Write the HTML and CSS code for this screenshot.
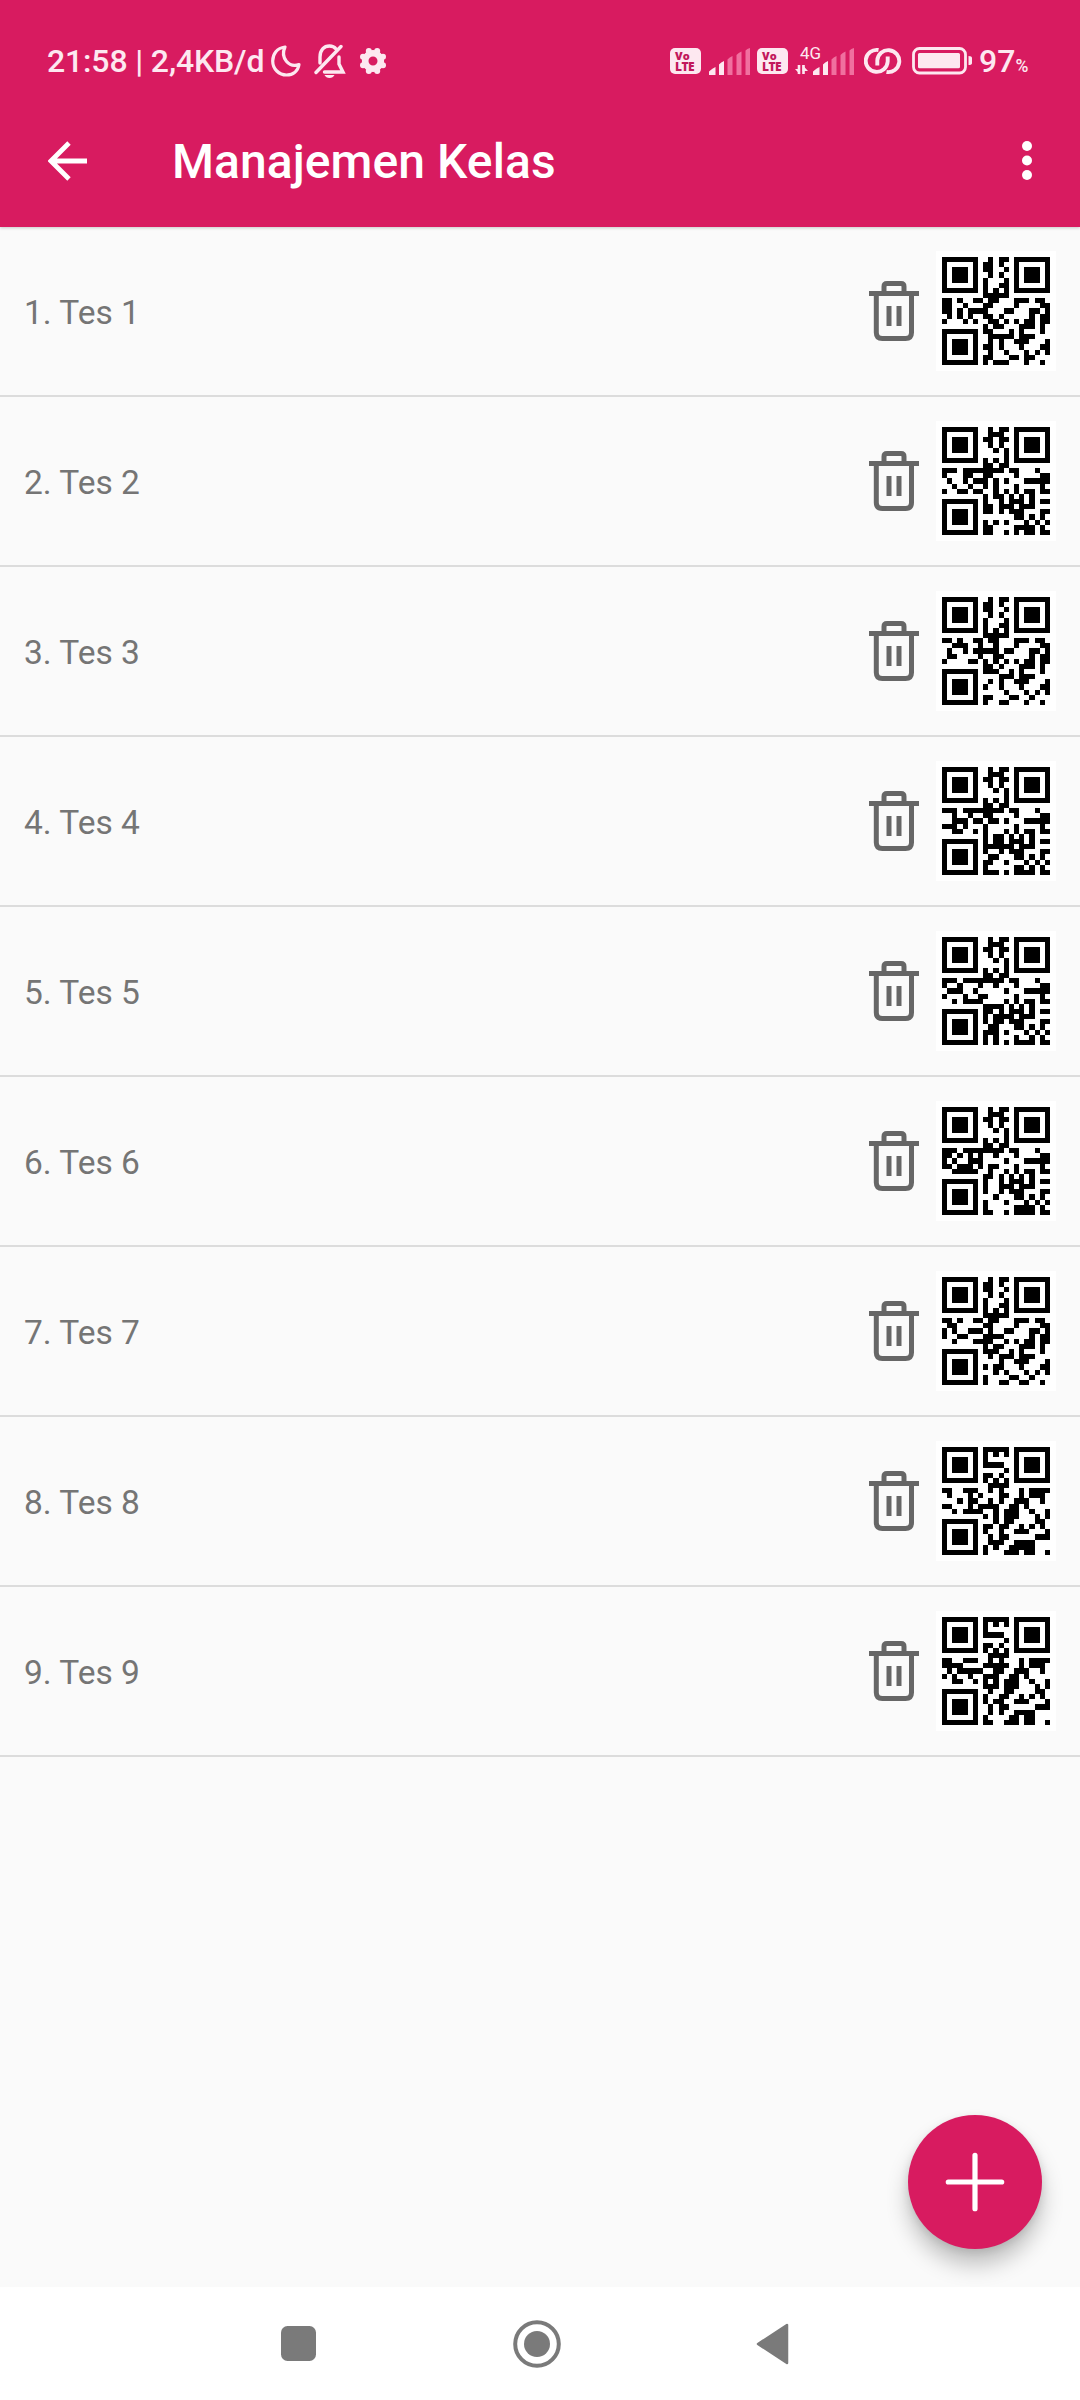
FILE: index.html
```html
<!DOCTYPE html>
<html lang="id">
<head>
<meta charset="utf-8">
<title>Manajemen Kelas</title>
<link rel="stylesheet" href="styles.css">
</head>
<body>
<svg class="defs" width="0" height="0">
  <symbol id="signal" viewBox="0 0 42 27">
    <path d="M0 27v-3.500q3.500-3.500 6.500-4.500v8zM10 27V16.500q2-2.500 5-3.500v14z" fill="#fde8f0"/>
    <path d="M18.500 27V11.500q2-2.500 5-3.500v19zM27.500 27V7q2-2.500 5-3.500V27zM36.500 27V2.500Q38 .5 41 0v27z" fill="#f0709f"/>
  </symbol>
  <symbol id="trash" viewBox="0 0 50 60">
    <path d="M0 12.500h50M15 12V5.500Q15 2.500 18 2.500H32Q35 2.500 35 5.500V12M7.300 13V51.500Q7.300 57.500 13.300 57.500H36.500Q42.500 57.500 42.500 51.500V13M20 25V45M30 25V45" fill="none" stroke="#666" stroke-width="5"/>
  </symbol>
</svg>
<main class="screen">
  <header class="top">
    <div class="status">
      <span class="clock">21:58 | 2,4KB/d</span>
      <svg class="moon" width="30" height="32" viewBox="0 0 30 32"><path d="M14 2C6 3 1.700 9 1.700 16 1.700 24 8 30 15.500 30 22 30 27 26 28 19.500 18 23 9 13 14 2Z" fill="none" stroke="#fde8f0" stroke-width="3.200" stroke-linejoin="round"/></svg>
      <svg class="bell" width="32" height="34" viewBox="0 0 32 34"><g fill="none" stroke="#fde8f0" stroke-width="3.400" stroke-linecap="round"><path d="M6 19V13C6 6 10 2 15.500 2 18.500 2 20.500 3 22 5M25 13V20L29 28H10.500M2 28.500 27 2.500"/></g><path d="M10.500 31h10q-1.500 3-5 3t-5-3z" fill="#fde8f0"/></svg>
      <svg class="gear" width="28" height="28" viewBox="-14 -14 28 28"><circle r="7.800" fill="none" stroke="#fde8f0" stroke-width="6.600"/><g fill="#fde8f0"><circle cx="-4.200" cy="-10" r="3"/><circle cx="4.200" cy="-10" r="3"/><circle cx="-4.200" cy="10" r="3"/><circle cx="4.200" cy="10" r="3"/><circle cx="-10" cy="-4.200" r="3"/><circle cx="-10" cy="4.200" r="3"/><circle cx="10" cy="-4.200" r="3"/><circle cx="10" cy="4.200" r="3"/></g></svg>
      <span class="spacer"></span>
      <span class="volte"><b>Vo</b><b class="lte">LTE</b></span>
      <svg class="signal" width="42" height="27"><use href="#signal"/></svg>
      <span class="volte"><b>Vo</b><b class="lte">LTE</b></span>
      <svg class="signal4g" width="60" height="40" viewBox="0 -6 60 40">
        <text x="5" y="12" font-family="Roboto, sans-serif" font-size="17" textLength="21" fill="#fde8f0">4G</text>
        <path d="M4 18V27M8.500 18V27" stroke="#fde8f0" stroke-width="2.600"/><path d="M0 22H5V27.500zM7.500 18V24H13z" fill="#fde8f0"/>
        <use href="#signal" x="18" y="1" width="42" height="27"/>
      </svg>
      <svg class="link" width="38" height="28" viewBox="0 0 38 28"><path d="M14.500 3A11 11 0 1 0 23.700 14.500V9.500M22.500 25A11 11 0 1 0 13.300 13.500V18.500" fill="none" stroke="#fde8f0" stroke-width="3.900"/></svg>
      <svg class="battery" width="61" height="28" viewBox="0 0 61 28"><rect x="1.500" y="1.500" width="52" height="24.500" rx="6" fill="none" stroke="#fde8f0" stroke-width="2.800"/><rect x="6" y="6" width="42" height="15.300" rx="1.500" fill="#fde8f0"/><path d="M56.500 9q3.500 0 3.500 2v5q0 2-3.500 2z" fill="#fde8f0"/></svg>
      <span class="level">97<small>%</small></span>
    </div>
    <div class="toolbar">
      <svg width="40" height="40" viewBox="0 0 40 40"><path d="M39 20H4M21 2 3 20 21 38" fill="none" stroke="#fff" stroke-width="4.800"/></svg>
      <h1>Manajemen Kelas</h1>
      <svg width="12" height="42" viewBox="0 0 12 42"><g fill="#fff"><circle cx="6" cy="6" r="5"/><circle cx="6" cy="20.500" r="5"/><circle cx="6" cy="35" r="5"/></g></svg>
    </div>
  </header>
  <ul class="list" id="list"></ul>
  <button class="fab" aria-label="Tambah"><svg width="60" height="60" viewBox="0 0 60 60"><path d="M30 3.300V56.700M3.300 30H56.700" stroke="#fff" stroke-width="5.200" stroke-linecap="round"/></svg></button>
  <nav class="nav">
    <svg width="36" height="36"><rect width="35" height="35" rx="6.500" fill="#7a7a7a"/></svg>
    <svg width="50" height="50" viewBox="-25 -25 50 50"><circle r="21.800" fill="none" stroke="#7a7a7a" stroke-width="4"/><circle r="13" fill="#7a7a7a"/></svg>
    <svg width="34" height="42" viewBox="0 0 34 42"><path d="M31 2V40L2 21Z" fill="#7a7a7a" stroke="#7a7a7a" stroke-width="2.500" stroke-linejoin="round"/></svg>
  </nav>
</main>
<script src="app.js"></script>
</body>
</html>
```
FILE: styles.css
```css
* { box-sizing: border-box; }
body { margin: 0; font-family: Roboto, sans-serif; background: #fafafa; }
.defs { position: absolute; }
.screen { position: relative; width: 1080px; height: 2400px; display: flex; flex-direction: column; overflow: hidden; }
.screen svg { display: block; flex: none; }
.top { height: 227px; background: #d81b60; box-shadow: 0 1px 3px rgba(0, 0, 0, .2); }
.status { height: 122px; padding: 0 52px 0 47px; display: flex; align-items: center; color: #fde8f0; }
.clock { font-size: 32px; font-weight: 500; letter-spacing: -.15px; width: 224px; white-space: nowrap; }
.bell { margin-left: 13px; }
.gear { margin-left: 13px; }
.spacer { flex: 1; }
.volte { flex: none; width: 31px; height: 26px; padding: 2px 0 0 5px; border-radius: 5px; background: #fde8f0; color: #c2185b; font-family: "Open Sans", sans-serif; }
.volte b { display: block; font-size: 11px; line-height: 11px; font-weight: 800; }
.volte .lte { font-size: 12px; letter-spacing: -.5px; }
.signal { margin: 0 6px 0 8px; }
.signal4g { margin-left: 7px; }
.link { margin-left: 9px; }
.battery { margin-left: 10px; }
.level { flex: none; width: 49px; margin-left: 6px; font-size: 32px; font-weight: 500; white-space: nowrap; }
.level small { font-size: 17.500px; }
.toolbar { height: 77px; padding: 0 47px 0 48px; display: flex; align-items: center; color: #fff; }
.toolbar h1 { flex: 1; margin: 1px 0 0 84px; font-size: 48px; font-weight: 500; letter-spacing: .07px; }
.list { flex: 1; margin: 0; padding: 0; list-style: none; }
.item { height: 170px; padding: 0 24px; display: flex; align-items: center; border-bottom: 2px solid #dcdcdc; }
.name { flex: 1; padding-top: 2px; font-size: 33.500px; color: #757575; }
.qr { margin-left: 17px; background: #fff; }
.fab { position: absolute; left: 908px; top: 2115px; width: 134px; height: 134px; padding: 0; border: 0; border-radius: 50%; background: #d81b60; display: flex; align-items: center; justify-content: center; box-shadow: 0 16px 22px rgba(0, 0, 0, .23), 0 3px 8px rgba(0, 0, 0, .1); }
.nav { height: 113px; padding: 0 290px 0 281px; background: #fff; display: flex; align-items: center; justify-content: space-between; }
```
FILE: app.js
```js
// QR version 1, level L, byte mode.
const N = 21;

const MASKS = [
  (r, c) => (r + c) % 2 === 0,
  (r, c) => r % 2 === 0,
  (r, c) => c % 3 === 0,
  (r, c) => (r + c) % 3 === 0,
  (r, c) => ((r >> 1) + Math.floor(c / 3)) % 2 === 0,
  (r, c) => (r * c) % 2 + (r * c) % 3 === 0,
  (r, c) => ((r * c) % 2 + (r * c) % 3) % 2 === 0,
  (r, c) => ((r + c) % 2 + (r * c) % 3) % 2 === 0
];

function gmul(a, b) {
  let p = 0;
  for (; b; b >>= 1) {
    if (b & 1) p ^= a;
    a <<= 1;
    if (a & 256) a ^= 0x11d;
  }
  return p;
}

function codewords(text) {
  let bits = '0100' + text.length.toString(2).padStart(8, '0');
  for (const ch of text) bits += ch.charCodeAt(0).toString(2).padStart(8, '0');
  bits += '0000';
  const data = bits.match(/.{8}/g).map(b => parseInt(b, 2));
  for (let i = 0; data.length < 19; i++) data.push(i % 2 ? 0x11 : 0xec);
  let gen = [1];
  for (let i = 0, root = 1; i < 7; i++, root = gmul(root, 2)) {
    const next = [...gen, 0];
    gen.forEach((g, k) => { next[k + 1] ^= gmul(g, root); });
    gen = next;
  }
  const rem = [...data, 0, 0, 0, 0, 0, 0, 0];
  for (let i = 0; i < 19; i++) {
    const f = rem[i];
    gen.forEach((g, k) => { rem[i + k] ^= gmul(g, f); });
  }
  return data.concat(rem.slice(19));
}

function build(words, mask) {
  const m = Array.from({ length: N }, () => Array(N).fill(null));
  for (const [y, x] of [[0, 0], [0, 14], [14, 0]]) {
    for (let r = -1; r < 8; r++) for (let c = -1; c < 8; c++) {
      if (y + r < 0 || y + r >= N || x + c < 0 || x + c >= N) continue;
      const d = Math.max(Math.abs(r - 3), Math.abs(c - 3));
      m[y + r][x + c] = d === 3 || d < 2 ? 1 : 0;
    }
  }
  for (let i = 8; i < 13; i++) m[6][i] = m[i][6] = 1 - i % 2;
  const head = 8 + mask;
  let rem = head << 10;
  for (let i = 14; i >= 10; i--) if (rem >> i & 1) rem ^= 0x537 << (i - 10);
  const fmt = ((head << 10) | rem) ^ 0x5412;
  const bit = i => fmt >> i & 1;
  for (let i = 0; i < 6; i++) m[i][8] = bit(i);
  m[7][8] = bit(6); m[8][8] = bit(7); m[8][7] = bit(8);
  for (let i = 9; i < 15; i++) m[8][14 - i] = bit(i);
  for (let i = 0; i < 8; i++) m[8][20 - i] = bit(i);
  for (let i = 8; i < 15; i++) m[6 + i][8] = bit(i);
  m[13][8] = 1;
  const bits = words.map(w => w.toString(2).padStart(8, '0')).join('');
  let k = 0, up = true;
  for (let right = 20; right > 0; right -= 2) {
    if (right === 6) right = 5;
    for (let s = 0; s < N; s++) {
      const r = up ? N - 1 - s : s;
      for (const c of [right, right - 1]) {
        if (m[r][c] === null) m[r][c] = (+bits[k++]) ^ (MASKS[mask](r, c) ? 1 : 0);
      }
    }
    up = !up;
  }
  return m;
}

function penalty(m) {
  let score = 0, dark = 0;
  const cols = m.map((_, i) => m.map(row => row[i]));
  for (const line of [...m, ...cols]) {
    const s = line.join('');
    for (const run of s.match(/0+|1+/g)) if (run.length > 4) score += run.length - 2;
    const padded = '0000' + s + '0000';
    for (let i = 4; i + 7 <= 25; i++) {
      if (padded.substr(i, 7) === '1011101' &&
        (padded.substr(i - 4, 4) === '0000' || padded.substr(i + 7, 4) === '0000')) score += 40;
    }
  }
  for (let r = 0; r < N; r++) for (let c = 0; c < N; c++) {
    dark += m[r][c];
    if (r < 20 && c < 20 && m[r][c] === m[r + 1][c] && m[r][c] === m[r][c + 1] && m[r][c] === m[r + 1][c + 1]) score += 3;
  }
  return score + Math.floor(Math.abs(dark * 2 - 441) * 10 / 441) * 10;
}

function qr(text) {
  const words = codewords(text);
  let best, low = Infinity;
  for (let i = 0; i < 8; i++) {
    const m = build(words, i), p = penalty(m);
    if (p < low) { low = p; best = m; }
  }
  const at = i => 6 + Math.round(i * 108 / N);
  let d = '';
  best.forEach((row, r) => row.forEach((v, c) => {
    if (v) d += `M${at(c)} ${at(r)}H${at(c + 1)}V${at(r + 1)}H${at(c)}z`;
  }));
  return `<svg class="qr" width="120" height="120" viewBox="0 0 120 120" shape-rendering="crispEdges"><path d="${d}"/></svg>`;
}

document.getElementById('list').innerHTML = [1, 2, 3, 4, 5, 6, 7, 8, 9].map(n => `
  <li class="item">
    <span class="name">${n}. Tes ${n}</span>
    <svg width="50" height="60"><use href="#trash"/></svg>
    ${qr('Tes ' + n)}
  </li>`).join('');
```
